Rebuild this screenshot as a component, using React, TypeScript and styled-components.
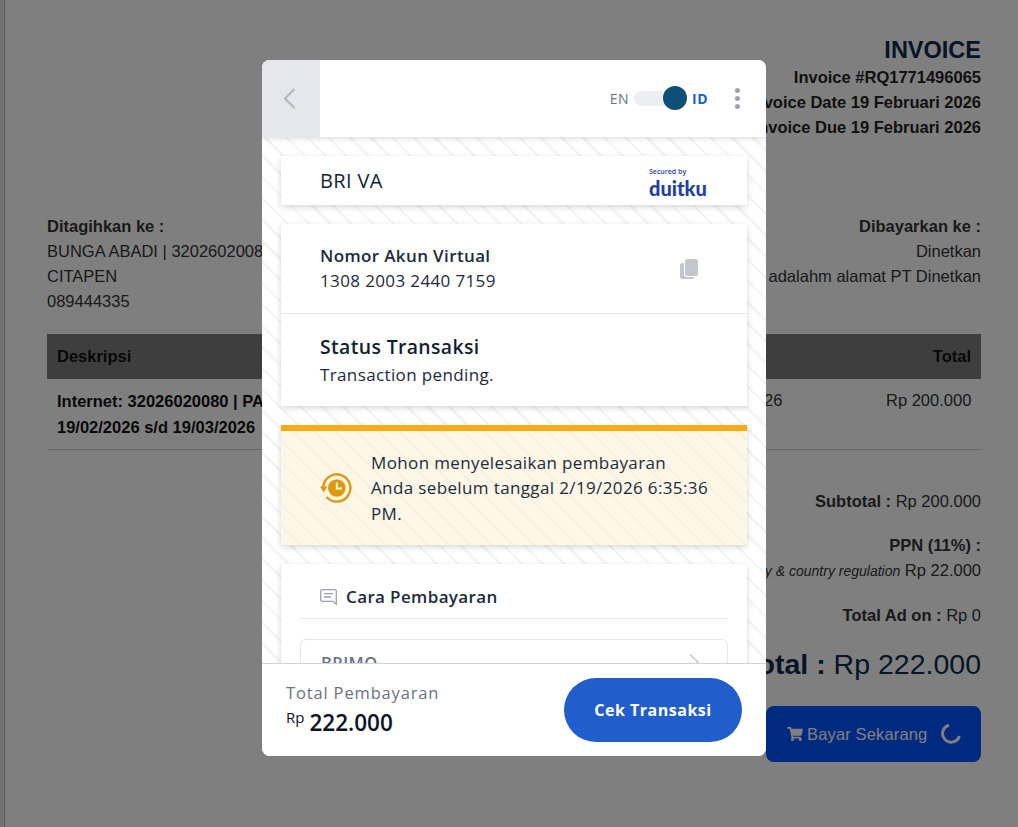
import { FC } from "react";
import styled, { createGlobalStyle } from "styled-components";

const GlobalStyle = createGlobalStyle`
  html, body {
    margin: 0;
    padding: 0;
    background: #dfe2e7;
  }

  * {
    box-sizing: border-box;
  }
`;

const App: FC = () => {
  return (
    <>
      <GlobalStyle />
      <InvoicePage>
        <InvoiceHead>
          <InvoiceTitle>INVOICE</InvoiceTitle>
          <InvoiceMeta>Invoice #RQ1771496065</InvoiceMeta>
          <InvoiceMeta>Invoice Date 19 Februari 2026</InvoiceMeta>
          <InvoiceMeta>Invoice Due 19 Februari 2026</InvoiceMeta>
        </InvoiceHead>

        <Parties>
          <div>
            <strong>Ditagihkan ke :</strong>
            <br />
            BUNGA ABADI | 32026020080
            <br />
            CITAPEN
            <br />
            089444335
          </div>
          <PartyRight>
            <strong>Dibayarkan ke :</strong>
            <br />
            Dinetkan
            <br />
            Ini adalahm alamat PT Dinetkan
          </PartyRight>
        </Parties>

        <TableHead>
          <span>Deskripsi</span>
          <span>Total</span>
        </TableHead>
        <TableRow>
          <RowTitle>
            Internet: 32026020080 | PAKET
            <br />
            19/02/2026 s/d 19/03/2026
          </RowTitle>
          <RowQty>26</RowQty>
          <RowAmount>Rp 200.000</RowAmount>
        </TableRow>

        <Summary>
          <SummaryLine>
            <strong>Subtotal :</strong> Rp 200.000
          </SummaryLine>
          <SummaryLine>
            <strong>PPN (11%) :</strong>
            <br />
            <TaxNote>Tax by city &amp; country regulation</TaxNote> Rp 22.000
          </SummaryLine>
          <SummaryLine>
            <strong>Total Ad on :</strong> Rp 0
          </SummaryLine>
          <GrandTotal>
            <strong>Total :</strong> Rp 222.000
          </GrandTotal>
          <PayButton>
            <svg width="16" height="14" viewBox="0 0 576 512" fill="currentColor">
              <path d="M528 301.3l47.3-208C578.7 78.3 567.3 64 552 64H159.2l-9.2-44.8C147.8 8 137.9 0 126.5 0H24C10.7 0 0 10.7 0 24v16c0 13.3 10.7 24 24 24h69.9l70.2 343.4C147.3 417.1 136 435.2 136 456c0 30.9 25.1 56 56 56s56-25.1 56-56c0-15.7-6.4-29.8-16.8-40h209.6C430.4 426.2 424 440.3 424 456c0 30.9 25.1 56 56 56s56-25.1 56-56c0-22.2-12.9-41.3-31.6-50.4l5.5-24.3c3.4-15-8-29.3-23.4-29.3H218.1l-6.5-32h293c11.2 0 20.9-7.8 23.4-18.7z" />
            </svg>
            Bayar Sekarang
            <Spinner viewBox="0 0 20 20" width="20" height="20" fill="none">
              <path d="M8 1.2A8.6 8.6 0 1 0 18.4 12" stroke="currentColor" strokeWidth="3" />
            </Spinner>
          </PayButton>
        </Summary>
      </InvoicePage>

      <Backdrop>
        <Modal>
          <ModalHeader>
            <BackButton aria-label="back">
              <svg width="13" height="21" viewBox="0 0 13 21" fill="none">
                <path d="M11.5 1 L2 10.5 L11.5 20" stroke="#b1b5bb" strokeWidth="2" />
              </svg>
            </BackButton>
            <LangSwitch>
              <LangLabel>EN</LangLabel>
              <SwitchTrack>
                <SwitchKnob />
              </SwitchTrack>
              <LangLabel $active>ID</LangLabel>
            </LangSwitch>
            <MoreDots>
              <i />
              <i />
              <i />
            </MoreDots>
          </ModalHeader>

          <ModalBody>
            <MethodCard>
              <MethodName>BRI VA</MethodName>
              <DuitkuLogo>
                <SecuredBy>Secured by</SecuredBy>
                <DuitkuWord>duitku</DuitkuWord>
              </DuitkuLogo>
            </MethodCard>

            <InfoCard>
              <InfoRow>
                <InfoText>
                  <InfoLabel>Nomor Akun Virtual</InfoLabel>
                  <InfoValue>1308 2003 2440 7159</InfoValue>
                </InfoText>
                <svg width="18" height="20" viewBox="0 0 18 20" fill="#c3c6cb">
                  <path d="M5 2.2C5 1 6 0 7.2 0h8.6C17 0 18 1 18 2.2v12.6c0 1.2-1 2.2-2.2 2.2H7.2C6 17 5 16 5 14.8z" />
                  <path d="M0 6.2C0 5 1 4 2.2 4H4v11.2C4 16.8 5.2 18 6.8 18H14v.2c0 1-.8 1.8-1.8 1.8H2.2C1 20 0 19 0 17.8z" />
                </svg>
              </InfoRow>
              <StatusRow>
                <StatusTitle>Status Transaksi</StatusTitle>
                <InfoValue>Transaction pending.</InfoValue>
              </StatusRow>
            </InfoCard>

            <WarningCard>
              <svg width="32" height="30" viewBox="0 0 32 30" fill="none">
                <path d="M3.2 14A13.6 13.6 0 1 1 6.6 24" stroke="#de9a0f" strokeWidth="2.4" />
                <path d="M0 13.5h7.4L3.7 19.5z" fill="#de9a0f" />
                <circle cx="16.8" cy="15" r="8.8" fill="#de9a0f" />
                <path d="M16.8 9.5V15.5H22" stroke="#fdf6e8" strokeWidth="2" />
              </svg>
              <WarningText>
                Mohon menyelesaikan pembayaran
                <br />
                Anda sebelum tanggal 2/19/2026 6:35:36 PM.
              </WarningText>
            </WarningCard>

            <GuideCard>
              <GuideHead>
                <svg width="17" height="16" viewBox="0 0 17 16" fill="none" stroke="#9ba1aa" strokeWidth="1.3">
                  <path d="M2 .7h13c.7 0 1.3.6 1.3 1.3v13.2L13 12.3H2c-.7 0-1.3-.6-1.3-1.3V2C.7 1.3 1.3.7 2 .7z" />
                  <path d="M4 4.6h9M4 8h7" />
                </svg>
                <GuideTitle>Cara Pembayaran</GuideTitle>
              </GuideHead>
              <GuideItem>
                <span>BRIMO</span>
                <svg width="12" height="18" viewBox="0 0 12 18" fill="none">
                  <path d="M2 1.5 L10 9 L2 16.5" stroke="#c4c8ce" strokeWidth="1.5" />
                </svg>
              </GuideItem>
            </GuideCard>
          </ModalBody>

          <ModalFooter>
            <div>
              <TotalLabel>Total Pembayaran</TotalLabel>
              <TotalValue>
                <sup>Rp</sup>
                222.000
              </TotalValue>
            </div>
            <CheckButton>Cek Transaksi</CheckButton>
          </ModalFooter>
        </Modal>
      </Backdrop>
    </>
  );
};

const modalFont = `"Open Sans", "Noto Sans", sans-serif`;

const InvoicePage = styled.div`
  width: 1014px;
  height: 827px;
  margin-left: 4px;
  overflow: hidden;
  padding: 36px 37px 0 42px;
  border-left: 1px solid #bcbcbc;
  background: #fff;
  font-family: "Liberation Sans", Arial, sans-serif;
  font-size: 16.5px;
  line-height: 25px;
  color: #333;
`;

const InvoiceHead = styled.div`
  text-align: right;
  font-weight: 700;
`;

const InvoiceTitle = styled.div`
  font-size: 23.5px;
  line-height: 29px;
  color: #0a2a4a;
`;

const InvoiceMeta = styled.div`
  color: #222;
`;

const Parties = styled.div`
  display: flex;
  justify-content: space-between;
  margin-top: 74px;
`;

const PartyRight = styled.div`
  text-align: right;
`;

const TableHead = styled.div`
  display: flex;
  justify-content: space-between;
  align-items: center;
  height: 45px;
  margin-top: 20px;
  padding: 0 10px;
  background: #7d7d7d;
  font-weight: 700;
  color: #111;
`;

const TableRow = styled.div`
  display: flex;
  height: 71px;
  padding: 9px 10px 0;
  border-bottom: 1px solid #ccc;
`;

const RowTitle = styled.div`
  flex: 1;
  font-weight: 700;
  line-height: 26px;
  color: #111;
`;

const RowQty = styled.div`
  width: 122px;
`;

const RowAmount = styled.div`
  width: 85px;
  text-align: right;
  white-space: nowrap;
`;

const Summary = styled.div`
  display: flex;
  flex-direction: column;
  align-items: flex-end;
  margin-top: 39px;
  text-align: right;
`;

const SummaryLine = styled.div`
  margin-bottom: 19px;
`;

const TaxNote = styled.em`
  font-size: 14px;
`;

const GrandTotal = styled.div`
  font-size: 28.5px;
  line-height: 34px;
  color: #0a2a4a;
`;

const PayButton = styled.button`
  display: flex;
  align-items: center;
  gap: 4px;
  width: 215px;
  height: 56px;
  margin-top: 25px;
  padding: 0 0 0 21px;
  border: 0;
  border-radius: 8px;
  background: #0054ff;
  color: #fff;
  font: inherit;
  letter-spacing: 0.15px;
`;

const Spinner = styled.svg`
  margin-left: 10px;
`;

const Backdrop = styled.div`
  position: fixed;
  inset: 0;
  background: rgba(0, 0, 0, 0.5);
  display: flex;
  justify-content: center;
  align-items: flex-start;
  padding: 60px 0 0 10px;
`;

const Modal = styled.div`
  display: flex;
  flex-direction: column;
  width: 504px;
  height: 696px;
  border-radius: 8px;
  overflow: hidden;
  background: #fff;
  font-family: ${modalFont};
  font-size: 17px;
  letter-spacing: 0.37px;
  color: #1c2b3a;
`;

const ModalHeader = styled.div`
  position: relative;
  z-index: 1;
  display: flex;
  align-items: center;
  flex: 0 0 77px;
  background: #fff;
  box-shadow: 0 1px 6px rgba(0, 0, 0, 0.16);
`;

const BackButton = styled.button`
  display: flex;
  align-items: center;
  justify-content: center;
  align-self: stretch;
  width: 58px;
  padding: 0 4px 0 0;
  border: 0;
  background: #e5e7eb;
`;

const LangSwitch = styled.div`
  display: flex;
  align-items: center;
  gap: 5px;
  margin-left: auto;
`;

const LangLabel = styled.span<{ $active?: boolean }>`
  font-size: 14px;
  line-height: 20px;
  letter-spacing: 0.5px;
  font-weight: ${(p) => (p.$active ? 700 : 400)};
  color: ${(p) => (p.$active ? "#225dcc" : "#6b7280")};
`;

const SwitchTrack = styled.div`
  position: relative;
  width: 53px;
  height: 15px;
  border-radius: 8px;
  background: #eceef1;
`;

const SwitchKnob = styled.div`
  position: absolute;
  top: -5px;
  right: 0;
  width: 24px;
  height: 24px;
  border-radius: 50%;
  background: #0d4f78;
`;

const MoreDots = styled.div`
  display: flex;
  flex-direction: column;
  gap: 3px;
  margin: 0 26px 0 27px;

  i {
    display: block;
    width: 5px;
    height: 5px;
    border-radius: 50%;
    background: #9ca3af;
  }
`;

const ModalBody = styled.div`
  flex: 1;
  min-height: 0;
  overflow: hidden;
  display: flex;
  flex-direction: column;
  gap: 19px;
  padding: 19px 19px 0;
  background: repeating-linear-gradient(
    45deg,
    #fff 0,
    #fff 12.5px,
    #f4f4f5 12.5px,
    #f4f4f5 15px
  );
`;

const Card = styled.div`
  flex: none;
  background: #fff;
  box-shadow: 0 2px 6px rgba(0, 0, 0, 0.16);
`;

const MethodCard = styled(Card)`
  display: flex;
  align-items: center;
  justify-content: space-between;
  height: 49px;
  padding: 0 39px;
`;

const MethodName = styled.div`
  font-size: 20px;
  line-height: 26px;
  font-weight: 500;
  color: #0f1f33;
`;

const DuitkuLogo = styled.div`
  display: flex;
  flex-direction: column;
  width: 60px;
  margin-top: 6px;
  color: #263f9e;
`;

const SecuredBy = styled.span`
  font-size: 7px;
  line-height: 9px;
  font-weight: 600;
  letter-spacing: 0;
  padding-left: 1px;
`;

const DuitkuWord = styled.span`
  font-family: Lato, ${modalFont};
  font-size: 20px;
  line-height: 24px;
  font-weight: 900;
  letter-spacing: 0;
  padding-left: 1px;
`;

const InfoCard = styled(Card)``;

const InfoRow = styled.div`
  display: flex;
  align-items: center;
  justify-content: space-between;
  height: 90px;
  padding: 0 49px 0 39px;
  border-bottom: 1px solid #e5e7eb;
`;

const InfoText = styled.div`
  margin-bottom: 2px;
`;

const InfoLabel = styled.div`
  line-height: 25px;
  font-weight: 600;
`;

const InfoValue = styled.div`
  line-height: 25px;
`;

const StatusRow = styled.div`
  height: 92px;
  padding: 20px 39px 0;
`;

const StatusTitle = styled.div`
  font-size: 19.4px;
  line-height: 25px;
  font-weight: 600;
  color: #111f30;
  margin-bottom: 3px;
`;

const WarningCard = styled(Card)`
  display: flex;
  align-items: center;
  gap: 19px;
  height: 120px;
  padding: 0 26px 0 39px;
  border-top: 6px solid #f8ac16;
  background: repeating-linear-gradient(
    45deg,
    #fef6e7 0,
    #fef6e7 13px,
    #f8efdf 13px,
    #f8efdf 15px
  );
`;

const WarningText = styled.div`
  line-height: 25.5px;
  flex: 0 0 350px;
`;

const GuideCard = styled(Card)`
  padding: 0 19px 40px;
`;

const GuideHead = styled.div`
  display: flex;
  align-items: center;
  gap: 9px;
  height: 55px;
  padding: 12px 0 0 20px;
  border-bottom: 1px solid #e5e7eb;
`;

const GuideTitle = styled.div`
  line-height: 24px;
  font-weight: 600;
`;

const GuideItem = styled.div`
  display: flex;
  align-items: center;
  justify-content: space-between;
  height: 46px;
  margin-top: 20px;
  padding: 0 27px 0 20px;
  border: 1px solid #e5e7eb;
  border-radius: 6px;
  font-size: 16.5px;
  font-weight: 600;
  color: #6b7280;
`;

const ModalFooter = styled.div`
  position: relative;
  z-index: 1;
  display: flex;
  align-items: center;
  justify-content: space-between;
  flex: 0 0 93px;
  padding: 0 24px;
  border-top: 1px solid #d1d5db;
  background: #fff;
`;

const TotalLabel = styled.div`
  font-size: 16.5px;
  line-height: 22px;
  letter-spacing: 0.85px;
  margin-bottom: 4px;
  color: #6b7280;
`;

const TotalValue = styled.div`
  font-size: 22.5px;
  line-height: 30px;
  font-weight: 600;
  letter-spacing: 0;
  color: #0b1422;

  sup {
    font-size: 15px;
    line-height: 0;
    font-weight: 400;
    margin-right: 5px;
  }
`;

const CheckButton = styled.button`
  width: 178px;
  height: 64px;
  border: 0;
  border-radius: 32px;
  background: #225dcc;
  color: #fff;
  font-family: ${modalFont};
  font-size: 16px;
  font-weight: 700;
  letter-spacing: 0.5px;
`;

export default App;
